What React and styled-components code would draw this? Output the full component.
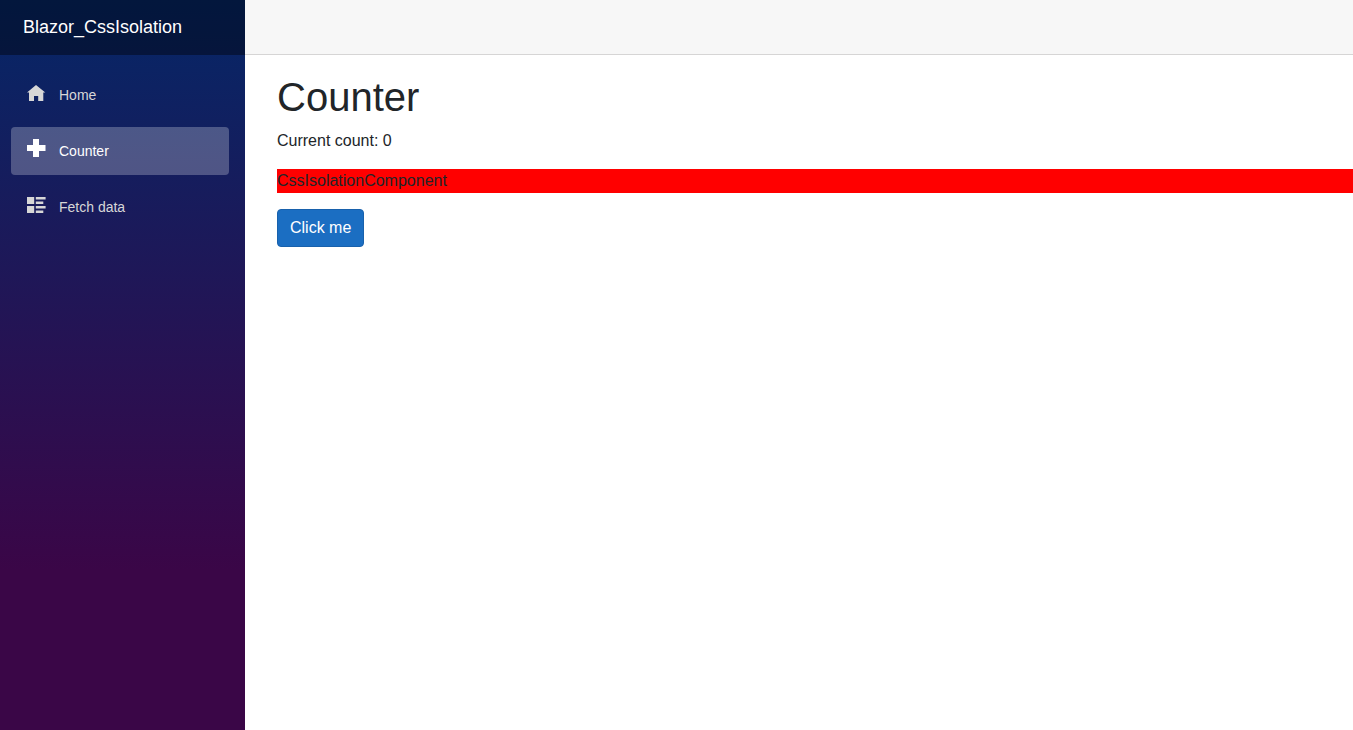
import React, { useState } from 'react';
import styled, { createGlobalStyle } from 'styled-components';

const GlobalStyle = createGlobalStyle`
    *, *::before, *::after {
        box-sizing: border-box;
    }
    body {
        margin: 0;
        background-color: #fff;
        color: #212529;
        font-family: "Liberation Sans", Arial, sans-serif;
        font-size: 16px;
        line-height: 24px;
    }
`

const Page = styled.div`
    display: flex;
    min-height: 100vh;
    overflow: hidden;
`

const Sidebar = styled.div`
    flex: 0 0 245px;
    background-image: linear-gradient(180deg, rgb(5, 39, 103) 0%, #3a0647 78%);
`

const Brand = styled.div`
    display: flex;
    align-items: center;
    height: 55px;
    padding: 0 23px 2px;
    background-color: rgba(0, 0, 0, 0.4);
`

const BrandLink = styled.a`
    color: #fff;
    font-size: 18px;
    text-decoration: none;
`

const Menu = styled.ul`
    display: flex;
    flex-direction: column;
    gap: 8px;
    list-style: none;
    margin: 0;
    padding: 16px 16px 16px 11px;
`

const MenuLink = styled.a`
    display: flex;
    align-items: center;
    gap: 13px;
    height: 48px;
    padding: 0 15px;
    border-radius: 4px;
    font-size: 14px;
    text-decoration: none;
    color: ${props => props.$active ? '#fff' : '#d7d7d7'};
    background-color: ${props => props.$active ? 'rgba(255, 255, 255, 0.25)' : 'transparent'};
`

const Icon = styled.svg`
    width: 20px;
    height: 20px;
    margin-bottom: 4px;
    fill: currentColor;
`

const Main = styled.div`
    flex: 1;
    min-width: 0;
`

const TopRow = styled.div`
    height: 55px;
    background-color: #f7f7f7;
    border-bottom: 1px solid #d6d5d5;
`

const Content = styled.div`
    padding: 18px 0 0 32px;
`

const Title = styled.h1`
    margin: 0 0 8px;
    font-size: 40px;
    font-weight: 500;
    line-height: 48px;
`

const Text = styled.p`
    margin: 0 0 16px;
`

const Isolated = styled.div`
    margin-bottom: 16px;
    background-color: red;
`

const Button = styled.button`
    padding: 6px 12px;
    border: 1px solid #1861ac;
    border-radius: 4px;
    background-color: #1b6ec2;
    color: #fff;
    font: inherit;
    cursor: pointer;
`

const HomeIcon = () => (
    <Icon viewBox="0 0 20 20" aria-hidden="true">
        <path d="M10 2 L19.3 9.6 H17.3 V18 H12.2 V13 H8 V18 H3 V9.6 H1 Z" />
    </Icon>
);

const PlusIcon = () => (
    <Icon viewBox="0 0 20 20" aria-hidden="true">
        <path d="M7 0 H13 V6 H19.5 V12 H13 V18 H7 V12 H1 V6 H7 Z" />
    </Icon>
);

const ListIcon = () => (
    <Icon viewBox="0 0 20 20" aria-hidden="true">
        <path d="M1 2 H8.2 V9 H1 Z M1 11 H8.2 V18 H1 Z M9.8 2 H19.6 V4.6 H9.8 Z M9.8 6.4 H17.3 V9 H9.8 Z M9.8 11 H19.6 V13.6 H9.8 Z M9.8 15.4 H17.3 V18 H9.8 Z" />
    </Icon>
);

const NavMenu = () => (
    <Sidebar>
        <Brand>
            <BrandLink href="#">Blazor_CssIsolation</BrandLink>
        </Brand>
        <nav>
            <Menu>
                <li><MenuLink href="#home"><HomeIcon />Home</MenuLink></li>
                <li><MenuLink href="#counter" $active><PlusIcon />Counter</MenuLink></li>
                <li><MenuLink href="#fetchdata"><ListIcon />Fetch data</MenuLink></li>
            </Menu>
        </nav>
    </Sidebar>
);

const Counter = () => {
    const [count, setCount] = useState(0);

    return (
        <Content>
            <Title>Counter</Title>
            <Text>Current count: {count}</Text>
            <Isolated>CssIsolationComponent</Isolated>
            <Button type="button" onClick={() => setCount(count + 1)}>Click me</Button>
        </Content>
    );
};

const App = () => (
    <>
        <GlobalStyle />
        <Page>
            <NavMenu />
            <Main>
                <TopRow />
                <Counter />
            </Main>
        </Page>
    </>
);

export default App;
